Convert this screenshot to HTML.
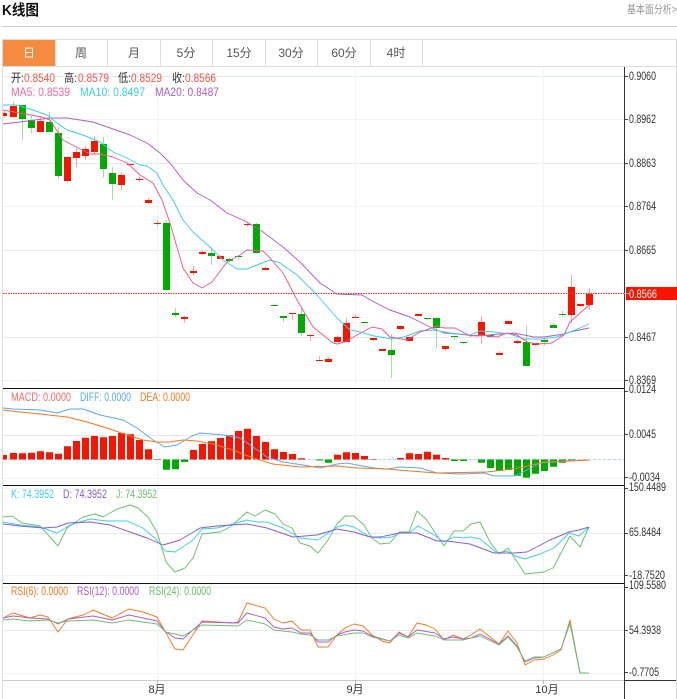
<!DOCTYPE html>
<html><head><meta charset="utf-8"><style>
html,body{margin:0;padding:0;background:#fff;width:677px;height:699px;overflow:hidden}
svg{display:block;font-family:"Liberation Sans","Noto Sans CJK SC",sans-serif}
.l{fill:none;stroke-linejoin:round;stroke-width:.95}
</style></head><body>
<svg width="677" height="699" viewBox="0 0 677 699" xmlns="http://www.w3.org/2000/svg">
<rect width="677" height="699" fill="#fff"/>
<!-- header -->
<text x="2" y="15" font-size="15" font-weight="bold" fill="#111" textLength="37" lengthAdjust="spacingAndGlyphs">K线图</text>
<text x="627" y="13" font-size="11" fill="#999" textLength="50" lengthAdjust="spacingAndGlyphs">基本面分析&gt;</text>
<path d="M2 26.5H677" stroke="#ccc"/>
<!-- tabs -->
<path d="M2.5 699V39.5H676.5V699" fill="none" stroke="#ddd"/>
<path d="M2 66.5H677M55.5 40V66M107.5 40V66M160.5 40V66M212.5 40V66M265.5 40V66M317.5 40V66M370.5 40V66M422.5 40V66" stroke="#ddd" fill="none"/>
<rect x="3" y="40" width="52" height="26" fill="#f58b3f"/>
<g font-size="12" fill="#555" text-anchor="middle">
<text x="29" y="57" fill="#fff">日</text><text x="81" y="57">周</text><text x="134" y="57">月</text><text x="186" y="57">5分</text><text x="239" y="57">15分</text><text x="291" y="57">30分</text><text x="344" y="57">60分</text><text x="396" y="57">4时</text>
</g>
<!-- grid -->
<path d="M3 76.5H624" stroke="#deebf1"/>
<path d="M3 119.5H624M3 206.5H624M3 380.5H624M3 391.5H624M3 478.5H624M3 488.5H624M3 575.5H624M3 587.5H624M3 673.5H624" stroke="#eef3f6"/>
<path d="M3 163.5H624M3 250.5H624M3 337.5H624M3 435.5H624M3 533.5H624M3 630.5H624" stroke="#e3ebf0"/>
<path d="M157.5 67V680M355.5 67V680M543.5 67V680" stroke="#f0f4f7"/>
<!-- legend -->
<g font-size="12">
<text x="11" y="82" fill="#333" textLength="13" lengthAdjust="spacingAndGlyphs">开:</text><text x="24" y="82" fill="#f5564a" textLength="31" lengthAdjust="spacingAndGlyphs">0.8540</text>
<text x="64" y="82" fill="#333" textLength="13" lengthAdjust="spacingAndGlyphs">高:</text><text x="78" y="82" fill="#f5564a" textLength="31" lengthAdjust="spacingAndGlyphs">0.8579</text>
<text x="118" y="82" fill="#333" textLength="13" lengthAdjust="spacingAndGlyphs">低:</text><text x="131" y="82" fill="#f5564a" textLength="31" lengthAdjust="spacingAndGlyphs">0.8529</text>
<text x="172" y="82" fill="#333" textLength="13" lengthAdjust="spacingAndGlyphs">收:</text><text x="185" y="82" fill="#f5564a" textLength="31" lengthAdjust="spacingAndGlyphs">0.8566</text>
<text x="11" y="96" fill="#f56a9b" textLength="59" lengthAdjust="spacingAndGlyphs">MA5: 0.8539</text>
<text x="80" y="96" fill="#3fcfe0" textLength="65" lengthAdjust="spacingAndGlyphs">MA10: 0.8497</text>
<text x="155" y="96" fill="#b05cc8" textLength="64" lengthAdjust="spacingAndGlyphs">MA20: 0.8487</text>
<text x="11" y="401" fill="#f56a6a" textLength="60" lengthAdjust="spacingAndGlyphs">MACD: 0.0000</text>
<text x="80" y="401" fill="#5aa9f0" textLength="51" lengthAdjust="spacingAndGlyphs">DIFF: 0.0000</text>
<text x="140" y="401" fill="#f47a20" textLength="50" lengthAdjust="spacingAndGlyphs">DEA: 0.0000</text>
<text x="11" y="498" fill="#3fcfe0" textLength="43" lengthAdjust="spacingAndGlyphs">K: 74.3952</text>
<text x="63" y="498" fill="#8a5cd0" textLength="44" lengthAdjust="spacingAndGlyphs">D: 74.3952</text>
<text x="116" y="498" fill="#6cbf6c" textLength="41" lengthAdjust="spacingAndGlyphs">J: 74.3952</text>
<text x="11" y="595" fill="#f47a20" textLength="57" lengthAdjust="spacingAndGlyphs">RSI(6): 0.0000</text>
<text x="77" y="595" fill="#b05cc8" textLength="62" lengthAdjust="spacingAndGlyphs">RSI(12): 0.0000</text>
<text x="149" y="595" fill="#6cbf6c" textLength="62" lengthAdjust="spacingAndGlyphs">RSI(24): 0.0000</text>
</g>
<!-- wicks -->
<path transform="translate(.5,0)" fill="none" stroke="#f9a8a0" d="M4 111V118M13 102V118M40 116V132M67 157V182M76 148V167M85 146V160M94 136V155M121 172V190M139 177V182M148 198V204M157 220V226M184 316V323M193 266V275M202 250V255M220 255V259M247 223V227M265 267V270M292 313V320M310 335V341M319 356V361M328 357V362M337 336V342M346 318V342M355 315V318M373 338V341M382 349V351M400 326V330M409 337V341M418 314V316M445 346V351M481 316V344M499 351V355M517 340V344M535 343V346M571 275V323M580 304V307M589 288V310"/>
<path transform="translate(.5,0)" fill="none" stroke="#a5dba5" d="M22 105V140M31 116V133M49 112V132M58 127V179M103 137V178M112 167V200M166 220V290M175 308V317M211 248V265M229 258V262M238 255V260M256 223V253M283 316V322M301 307V336M391 334V378M427 318V320M436 318V348M454 336V340M463 342V344M490 335V338M526 326V366M544 339V346M553 323V328M562 311V317"/>
<!-- candles -->
<path fill="#f71500" d="M3 113h4v3h-4zM10 106h7v11h-7zM37 121h7v11h-7zM64 157h7v24h-7zM73 152h7v6h-7zM82 149h7v7h-7zM91 141h7v11h-7zM118 175h7v10h-7zM127 164h7v1h-7zM136 179h7v1h-7zM145 200h7v3h-7zM154 223h7v1h-7zM181 317h7v2h-7zM190 271h7v2h-7zM199 252h7v2h-7zM217 256h7v3h-7zM244 224h7v1h-7zM262 268h7v2h-7zM289 313h7v1h-7zM307 335h7v1h-7zM316 360h7v1h-7zM325 359h7v3h-7zM334 337h7v5h-7zM343 323h7v19h-7zM352 317h7v1h-7zM370 338h7v2h-7zM379 349h7v2h-7zM397 326h7v3h-7zM406 337h7v4h-7zM415 314h7v2h-7zM442 346h7v3h-7zM478 322h7v14h-7zM496 353h7v2h-7zM505 321h7v3h-7zM514 341h7v2h-7zM532 343h7v2h-7zM568 287h7v28h-7zM577 304h7v2h-7zM586 294h7v11h-7z"/>
<path fill="#00a800" d="M19 105h7v14h-7zM28 120h7v8h-7zM46 122h7v10h-7zM55 133h7v43h-7zM100 144h7v25h-7zM109 173h7v11h-7zM163 223h7v67h-7zM172 313h7v2h-7zM208 253h7v3h-7zM226 259h7v2h-7zM235 256h7v1h-7zM253 224h7v29h-7zM271 305h7v1h-7zM280 316h7v2h-7zM298 314h7v19h-7zM361 322h7v1h-7zM388 350h7v5h-7zM424 318h7v1h-7zM433 318h7v10h-7zM451 336h7v1h-7zM460 342h7v1h-7zM487 335h7v2h-7zM523 342h7v24h-7zM541 340h7v2h-7zM550 325h7v3h-7zM559 314h7v1h-7z"/>
<!-- MA lines -->
<polyline class="l" stroke="#b05cc8" points="3,124 20,122 50,118 67,118 93,122 110,128 130,135 147,143 160,153 170,163 183,180 197,193 210,200 227,213 247,222 263,232 283,247 300,262 320,283 337,294 362,295 374,302 390,310 410,317 430,327 444,333 457,334 477,336 500,334 514,333 534,337 544,337 564,334 570,332 589,328"/>
<polyline class="l" stroke="#3fcfe0" points="3,105 17,105 33,110 47,115 57,123 67,130 83,135 100,142 113,152 127,158 140,165 147,166 157,173 163,185 173,200 183,220 193,232 210,247 223,260 237,269 247,269 257,265 270,260 280,263 297,275 317,295 337,318 350,330 360,332 374,336 392,339 404,337 420,331 434,330 450,333 470,335 480,331 494,332 510,334 524,339 540,339 557,337 570,332 580,328 589,324"/>
<polyline class="l" stroke="#ed5a8a" points="3,110 42,117 50,120 63,140 80,149 90,154 100,154 113,157 127,163 140,175 153,183 162,200 170,223 183,268 193,283 202,288 212,282 227,262 240,255 247,250 263,251 270,258 283,273 297,300 313,327 333,343 337,344 345,342 357,335 372,327 382,329 390,337 407,340 420,332 437,326 444,328 455,328 470,336 480,335 497,337 507,333 517,335 527,342 537,344 552,343 564,335 570,322 589,305"/>
<path d="M3 293.5H624" stroke="#e0352b" stroke-dasharray="1.5 1" fill="none"/>
<!-- MACD -->
<path d="M3 459.5H624" stroke="#a8dcef" stroke-dasharray="3 2" fill="none"/>
<path fill="#f71500" d="M3 455h4V459.5h-4zM10 453h7V459.5h-7zM19 453.300h7V459.5h-7zM28 452.700h7V459.5h-7zM37 451.300h7V459.5h-7zM46 452.300h7V459.500h-7zM55 453.700h7V459.500h-7zM64 446.300h7V459.500h-7zM73 441h7V459.500h-7zM82 437.700h7V459.500h-7zM91 436h7V459.500h-7zM100 437.300h7V459.500h-7zM109 436h7V459.500h-7zM118 433h7V459.500h-7zM127 434.300h7V459.500h-7zM136 440h7V459.500h-7zM145 449.300h7V459.500h-7zM154 459h7V459.500h-7zM190 450h7V459.500h-7zM199 444h7V459.500h-7zM208 441.300h7V459.500h-7zM217 438h7V459.500h-7zM226 435.300h7V459.500h-7zM235 431h7V459.500h-7zM244 428.700h7V459.500h-7zM253 436h7V459.500h-7zM262 442h7V459.500h-7zM271 449.300h7V459.500h-7zM280 452h7V459.500h-7zM289 454h7V459.500h-7zM298 458.300h7V459.500h-7zM334 454.700h7V459.500h-7zM343 452.300h7V459.500h-7zM352 453h7V459.500h-7zM361 456h7V459.500h-7zM370 459h7V459.500h-7zM397 458h7V459.500h-7zM406 453.300h7V459.500h-7zM415 454h7V459.500h-7zM424 451.700h7V459.500h-7zM433 454.700h7V459.500h-7zM442 458h7V459.500h-7z"/>
<path fill="#00a800" d="M163 459.500h7V469.700h-7zM172 459.500h7V469.300h-7zM181 459.500h7V462h-7zM316 459.500h7V460.500h-7zM325 459.500h7V462.700h-7zM451 459.500h7V461h-7zM460 459.500h7V461h-7zM478 459.500h7V462.700h-7zM487 459.500h7V468h-7zM496 459.500h7V471h-7zM505 459.500h7V470h-7zM514 459.500h7V475.700h-7zM523 459.500h7V477.700h-7zM532 459.500h7V473.700h-7zM541 459.500h7V471h-7zM550 459.500h7V466.700h-7zM559 459.500h7V462.700h-7zM568 459.500h7V460.300h-7z"/>
<polyline class="l" stroke="#5aa9f0" points="3,408 13,409 40,410 57,413 70,409 83,409 100,415 123,420 137,428 153,440 165,447 177,445 192,436 200,433 223,435 240,438 253,447 267,457 283,462 303,465 320,468 337,464 347,463 357,465 374,468 387,469 400,467 420,468 437,473 460,474 484,473 494,476 514,476 527,470 540,463 554,462 570,461 589,460"/>
<polyline class="l" stroke="#f47a20" points="3,410 20,412 40,414 67,417 87,422 107,428 127,435 143,440 157,442 170,442 183,440 197,441 213,444 233,450 253,458 273,464 300,467 337,466 357,468 387,469 410,471 437,473 487,472 504,470 524,467 544,462 564,461 589,460"/>
<!-- KDJ -->
<polyline class="l" stroke="#6cbf6c" points="3,517 12,516 22,523 40,526 58,546 67,528 83,517 95,514 103,517 117,509 130,505 138,508 148,517 157,532 166,562 175,572 185,568 193,558 202,534 220,532 230,527 247,512 255,516 265,510 275,514 283,524 292,528 300,543 310,546 318,553 328,540 337,524 345,516 354,516 364,525 372,538 380,544 390,543 399,532 409,532 417,511 426,519 444,546 454,531 463,531 471,524 480,522 490,542 499,554 508,548 525,574 544,572 553,568 561,553 570,536 580,547 589,527"/>
<polyline class="l" stroke="#3fcfe0" points="3,522 20,525 40,527 57,533 70,525 90,519 107,521 127,521 143,528 157,540 165,551 175,552 193,540 202,529 217,528 233,524 247,520 257,522 267,522 283,528 300,538 318,540 337,527 345,525 354,527 370,537 382,538 392,537 400,533 409,533 418,526 434,535 444,542 454,537 464,538 470,537 480,539 497,553 507,551 515,556 525,559 540,554 554,548 569,533 579,536 589,527"/>
<polyline class="l" stroke="#8a5cd0" points="3,524 20,526 43,528 57,527 68,523 90,522 110,525 130,532 147,538 163,545 180,540 200,528 217,526 247,524 267,528 293,537 317,535 337,529 354,532 370,537 380,537 400,533 417,533 437,541 447,541 470,544 494,553 514,553 527,552 550,540 569,532 579,530 589,527"/>
<!-- RSI -->
<polyline class="l" stroke="#f47a20" points="3,618 13,613 30,618 40,615 48,617 58,632 68,619 83,615 93,610 112,618 129,609 143,612 157,617 166,633 175,649 183,650 202,621 233,623 238,622 247,603 265,608 274,619 283,623 292,621 301,630 310,630 318,647 328,647 337,635 345,628 354,624 363,626 372,635 382,641 390,643 399,632 408,637 417,623 426,625 435,629 444,640 453,635 463,639 471,635 480,629 499,644 508,631 517,643 525,665 534,660 544,659 553,655 561,650 570,620 580,673 589,673"/>
<polyline class="l" stroke="#b05cc8" points="3,618 13,616 30,618 48,619 58,624 68,619 93,616 112,620 129,615 157,621 166,632 175,638 183,639 202,622 238,623 247,613 265,618 274,627 283,629 292,628 301,633 310,633 318,642 328,642 337,635 345,632 354,630 363,631 372,636 390,641 399,633 408,637 417,630 435,633 444,639 453,637 463,639 471,638 480,634 499,644 508,636 517,646 525,662 534,658 544,657 561,649 570,623 580,673 589,673"/>
<polyline class="l" stroke="#6cbf6c" points="3,620 13,619 30,621 48,620 58,623 68,621 93,620 112,623 129,620 157,624 166,632 183,636 202,625 238,626 247,620 265,624 274,630 292,632 301,634 310,635 318,640 328,640 337,636 354,633 363,633 372,637 390,641 399,635 408,638 417,633 435,636 444,640 463,640 480,636 499,645 508,637 517,647 525,661 534,657 544,657 561,649 570,623 580,673 589,673"/>
<!-- frame -->
<rect x="625" y="67" width="51" height="632" fill="#fff"/>
<path d="M3 388.500H624M3 485.500H624M3 583.500H624" stroke="#111"/>
<path d="M3 680.500H624" stroke="#ccc"/>
<path d="M624.500 67V699M624 680.500H676" stroke="#333"/>
<path d="M157.500 680V684M355.500 680V684M543.500 680V684" stroke="#bbb"/>
<path d="M625 76.500H628M625 119.500H628M625 163.500H628M625 206.500H628M625 250.500H628M625 337.500H628M625 380.500H628M625 391.500H628M625 434.500H628M625 477.500H628M625 488.500H628M625 533.500H628M625 575.500H628M625 587.500H628M625 630.500H628M625 672.500H628" stroke="#444"/>
<rect x="626" y="287" width="51" height="13" fill="#f71500"/>
<path d="M624 293.500H629" stroke="#f9a8a0"/>
<g font-size="12" fill="#333">
<text x="629" y="80" textLength="27" lengthAdjust="spacingAndGlyphs">0.9060</text>
<text x="629" y="123" textLength="27" lengthAdjust="spacingAndGlyphs">0.8962</text>
<text x="629" y="167" textLength="27" lengthAdjust="spacingAndGlyphs">0.8863</text>
<text x="629" y="210" textLength="27" lengthAdjust="spacingAndGlyphs">0.8764</text>
<text x="629" y="254" textLength="27" lengthAdjust="spacingAndGlyphs">0.8665</text>
<text x="629" y="341" textLength="27" lengthAdjust="spacingAndGlyphs">0.8467</text>
<text x="629" y="384" textLength="27" lengthAdjust="spacingAndGlyphs">0.8369</text>
<text x="629" y="393" textLength="27" lengthAdjust="spacingAndGlyphs">0.0124</text>
<text x="629" y="438" textLength="27" lengthAdjust="spacingAndGlyphs">0.0045</text>
<text x="629" y="481" textLength="31" lengthAdjust="spacingAndGlyphs">-0.0034</text>
<text x="629" y="491" textLength="37" lengthAdjust="spacingAndGlyphs">150.4489</text>
<text x="629" y="536" textLength="32" lengthAdjust="spacingAndGlyphs">65.8484</text>
<text x="629" y="579" textLength="36" lengthAdjust="spacingAndGlyphs">-18.7520</text>
<text x="629" y="589" textLength="37" lengthAdjust="spacingAndGlyphs">109.5580</text>
<text x="629" y="634" textLength="32" lengthAdjust="spacingAndGlyphs">54.3938</text>
<text x="629" y="676" textLength="30" lengthAdjust="spacingAndGlyphs">-0.7705</text>
<text x="629" y="298" fill="#fff" textLength="28" lengthAdjust="spacingAndGlyphs">0.8566</text>
<text x="157" y="693" text-anchor="middle" font-size="11">8月</text>
<text x="355" y="693" text-anchor="middle" font-size="11">9月</text>
<text x="547" y="693" text-anchor="middle" font-size="11">10月</text>
</g>
</svg>
</body></html>
